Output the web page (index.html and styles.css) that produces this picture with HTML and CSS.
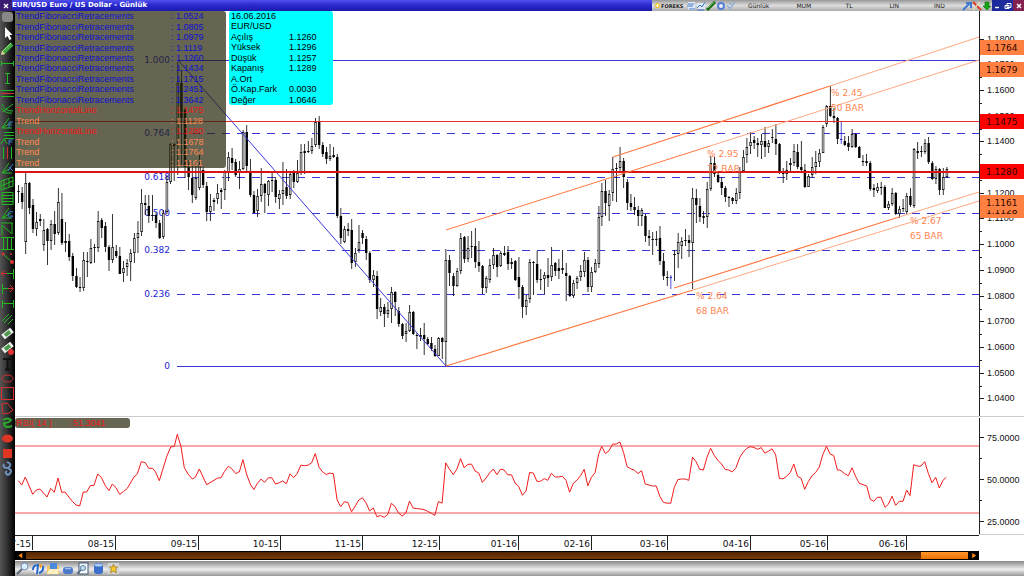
FILE: index.html
```html
<!DOCTYPE html>
<html lang="tr">
<head>
<meta charset="utf-8">
<title>EUR/USD Euro / US Dollar - Günlük</title>
<link rel="stylesheet" href="styles.css">
</head>
<body>
<div class="app">
  <header class="titlebar">
    <button class="close-tab" aria-label="Kapat"><svg viewBox="0 0 6 6" class="mini"><path d="M1 1L5 5M5 1L1 5" stroke="#fff" stroke-width="1.3"/></svg></button>
    <h1 class="title">EUR/USD Euro / US Dollar - Günlük</h1>
    <div class="options">
      <span class="brand"><i class="sun"></i>FOREKS</span>
      <div class="glyphs">
        <svg viewBox="0 0 10 10"><rect x="2" y="1" width="7" height="8" fill="#dfe9f8"/><path d="M2 3h6M1 5h6M3 8h6" stroke="#467ec8" stroke-width="1.2"/></svg>
        <svg viewBox="0 0 10 10"><rect x="1" y="2" width="8" height="6" fill="#dfe9f8"/><path d="M1 7L4 4L6 6L9 1M1 9h7" stroke="#3c78c8" fill="none"/></svg>
        <svg viewBox="0 0 10 10"><path d="M1 9L9 1" stroke="#176b17" stroke-width="3"/><path d="M2 7L8 1" stroke="#79c25c"/></svg>
        <svg viewBox="0 0 10 10"><circle cx="5" cy="5" r="3" stroke="#5580d5" stroke-width="2" fill="#eef"/></svg>
        <svg viewBox="0 0 10 10"><path d="M1 4L4 8L9 1M3 3h3" stroke="#91add8" stroke-width="1.3" fill="none"/></svg>
      </div>
      <nav class="modes">
        <button>Günlük</button><button>MUM</button><button>TL</button><button>LIN</button><button>IND</button>
      </nav>
      <div class="glyphs">
        <svg viewBox="0 0 10 10"><path d="M1 9L8 2M4 2h5v5" stroke="#3f78d0" stroke-width="2" fill="none"/></svg>
        <svg viewBox="0 0 10 10"><path d="M1 1L9 9" stroke="#dd3c20" stroke-width="2"/><path d="M1 9L8 1" stroke="#dbd8b0" stroke-width="1.5"/></svg>
        <svg viewBox="0 0 10 10"><path d="M3 1h4v4h2L5 9L1 5h2z" fill="#16a516" stroke="#087008" stroke-width=".6"/></svg>
      </div>
    </div>
    <div class="window-buttons">
      <button aria-label="Küçült"><svg viewBox="0 0 8 8"><path d="M2 5.5h4" stroke="#fff" stroke-width="1.4"/></svg></button>
      <button aria-label="Geri yükle"><svg viewBox="0 0 8 8"><path d="M3 1.500h4v4h-4zM1 3.500h4v3h-4z" fill="none" stroke="#fff"/></svg></button>
      <button aria-label="Pencereyi kapat" class="red"><svg viewBox="0 0 8 8"><path d="M2 2L6 6M6 2L2 6" stroke="#fff" stroke-width="1.4"/></svg></button>
    </div>
  </header>
  <div class="body">
    <aside class="tools" id="tools"></aside>
    <main class="workspace">
      <section class="pane">
        <svg class="chart" id="price" viewBox="15 11 1009 406" role="img" aria-label="EUR/USD"></svg>
        <table class="legend" id="legend"></table>
        <dl class="quote">
          <dt>16.06.2016</dt><dd></dd>
          <dt>EUR/USD</dt><dd></dd>
          <dt>Açılış</dt><dd>1.1260</dd>
          <dt>Yüksek</dt><dd>1.1296</dd>
          <dt>Düşük</dt><dd>1.1257</dd>
          <dt>Kapanış</dt><dd>1.1289</dd>
          <dt>A.Ort</dt><dd></dd>
          <dt>Ö.Kap.Fark</dt><dd>0.0030</dd>
          <dt>Değer</dt><dd>1.0646</dd>
        </dl>
      </section>
      <section class="pane">
        <svg class="chart" id="rsi" viewBox="15 417 1009 118" role="img" aria-label="RSI"></svg>
        <div class="rsi-tag"><span>RSI( 14 )</span><span>: 51.3041</span></div>
      </section>
      <svg class="chart" id="dates" viewBox="15 535 1009 16"></svg>
      <div class="scroll-row">
        <div class="scrollbar">
          <button aria-label="Sola"><svg viewBox="0 0 11 8"><path d="M7.500 1v6L3 4z" fill="#ff8a10"/></svg></button>
          <div class="track"><div class="thumb"></div></div>
          <button aria-label="Sağa"><svg viewBox="0 0 11 8"><path d="M4 1v6L8.500 4z" fill="#ff8a10"/></svg></button>
        </div>
      </div>
      <footer class="dock">
        <button aria-label="Ara"><svg viewBox="0 0 14 13"><path d="M1 12L6 7" stroke="#57687c" stroke-width="2"/><circle cx="8.500" cy="4.500" r="3.500" fill="#d7efff" stroke="#6d88a8"/></svg></button>
        <button aria-label="Yenile"><svg viewBox="0 0 14 13"><circle cx="7" cy="7" r="5" fill="#f4f7ff"/><path d="M2 8Q2 3 7 3L6 12M8 11Q13 9 12 4" fill="none" stroke="#2865c8" stroke-width="2"/><path d="M8 2l4 1l-3 4z" fill="#f0a020"/></svg></button>
        <button aria-label="Aç"><svg viewBox="0 0 14 13"><path d="M1 4h12v8h-12z" fill="#f2c45a"/><path d="M4 1h7v6h-7z" fill="#4d88dc"/><path d="M1 12L3 7h10l-1 5z" fill="#fff0bd"/></svg></button>
        <button aria-label="Bulut"><svg viewBox="0 0 14 13"><rect x="2" y="5" width="10" height="7" rx="3" fill="#4b78cb"/><path d="M4 6.500h6" stroke="#a9c5ef" stroke-width="1.500"/></svg></button>
        <button aria-label="Önizle"><svg viewBox="0 0 14 13"><rect x="3" y="1" width="9" height="11" fill="#f6fbff" stroke="#3c5672"/><circle cx="7" cy="6" r="2.500" fill="#c5e3f5" stroke="#537b9a"/><path d="M1 12L5 8" stroke="#45617b" stroke-width="1.500"/></svg></button>
        <button aria-label="Veri"><svg viewBox="0 0 14 13"><rect x="3" y="1" width="9" height="11" rx="3" fill="#3c6fca"/><ellipse cx="7.500" cy="3" rx="4" ry="1.500" fill="#aecbf5"/></svg></button>
        <button aria-label="Favori"><svg viewBox="0 0 14 13"><rect x="2" y="1" width="11" height="11" fill="#d4d4d4"/><path d="M7.500 2l1 3h3l-2 2l1 4l-3-2l-3 2l1-4l-2-2h3z" fill="#ffcc28" stroke="#98711d" stroke-width=".7"/></svg></button>
      </footer>
    </main>
  </div>
</div>
<script src="chart.js"></script>
</body>
</html>
```
FILE: styles.css
```css
* { box-sizing: border-box; }
body { margin: 0; background: #fff; font-family: "Liberation Sans", Arial, sans-serif; font-size: 9px; color: #000; }
button { margin: 0; padding: 0; border: 0; background: none; font: inherit; color: inherit; display: flex; align-items: center; justify-content: center; }
svg { display: block; }
.app { display: flex; flex-direction: column; min-height: 100vh; }
.titlebar { display: flex; height: 11px; background: linear-gradient(#5050ee, #2828cc 50%, #1b1bac); color: #fff; align-items: stretch; }
.close-tab { width: 12px; background: #3a1c70; }
.mini { width: 6px; height: 6px; }
.title { flex: 1; margin: 0; font: bold 7px/11px "DejaVu Sans", Verdana, sans-serif; white-space: nowrap; }
.options { display: flex; width: 340px; padding-left: 3px; align-items: center; background: linear-gradient(#999, #ddd 50%, #aaa); color: #222; font: 6px/10px "DejaVu Sans", Verdana, sans-serif; }
.brand { display: flex; align-items: center; width: 31px; font-size: 5px; font-weight: bold; }
.sun { width: 5px; height: 5px; margin-right: 1px; border: 1px solid #f6b900; border-radius: 50%; background: #fff7c0; }
.glyphs { display: flex; }
.glyphs svg { width: 10px; height: 10px; }
.modes { flex: 1; display: grid; grid-template-columns: repeat(5, 1fr); }
.window-buttons { display: flex; width: 32px; background: #1c2a9c; }
.window-buttons button { flex: 1; }
.window-buttons svg { width: 8px; height: 8px; }
.window-buttons .red { background: #842050; }
.body { flex: 1; display: flex; }
.tools { width: 15px; background: linear-gradient(90deg, #555, #333 45%, #000); }
.tools button { width: 15px; height: 15px; }
.tools svg { width: 15px; height: 15px; fill: none; }
.workspace { flex: 1; min-width: 0; display: flex; flex-direction: column; }
.pane { position: relative; }
.chart { width: 100%; height: auto; }
.chart text { font: 9px "DejaVu Sans", Verdana, sans-serif; }
.chart .num { font-family: "Liberation Sans", Arial, sans-serif; }
.legend { position: absolute; left: 0; top: 0; width: 211px; height: 157px; border-spacing: 0; border-radius: 0 3px 3px 0; background: rgba(35, 35, 9, .7); line-height: 10px; }
.legend td { padding: 0 0 0 1px; }
.legend td + td { width: 55px; padding: 0; }
.fib { color: #1010d0; }
.level { color: #f01818; }
.trend { color: #ff8850; }
.quote { position: absolute; left: 214px; top: 0; width: 104px; height: 94px; margin: 0; padding-left: 2px; border-radius: 3px; background: #0ff; display: grid; grid-template-columns: 58px 1fr; grid-auto-rows: 1fr; line-height: 10px; }
.quote dd { margin: 0; }
.rsi-tag { position: absolute; left: 0; top: 1px; display: flex; gap: 16px; width: 115px; padding-left: 1px; border-radius: 3px; background: #666653; color: #f01818; line-height: 10px; }
.scroll-row { padding-right: 45px; height: 10px; }
.scrollbar { display: flex; height: 9px; background: #000; padding: 1px 0; }
.scrollbar button { width: 11px; }
.scrollbar svg { width: 11px; height: 7px; }
.track { flex: 1; display: flex; justify-content: flex-end; background: linear-gradient(#502400, #783a04); }
.thumb { width: 5%; background: linear-gradient(#ff9628, #e87208); }
.dock { display: flex; gap: 1px; margin-top: auto; height: 15px; padding-left: 1px; background: linear-gradient(#888, #eee 55%, #999); }
.dock button { width: 14px; height: 15px; }
.dock svg { width: 14px; height: 13px; }
```
FILE: chart.js
```js
const priceSvg = document.getElementById('price');
const rsiSvg = document.getElementById('rsi');
const datesSvg = document.getElementById('dates');

// Each segment: first x, last x, then candles "high top bottom low kind".
// kind: f falling, h rising, b highlighted
const segments = [
[18.3, 235.5, `185 191 192 203 f,187 193 202 209 f,172 183 242 254 h,182 183 208 214 f,199 205 229 233 f,212 222 229 236 h,214 219 221 226 f,219 230 245 251 h,228 229 241 265 f,220 224 241 250 h,211 224 234 245 f,188 202 233 235 h,193 219 243 245 f,222 241 243 252 f,234 241 257 261 f,253 256 276 281 f,268 276 287 288 f,277 287 288 292 f,252 260 288 291 h,252 261 262 277 f,239 248 263 264 h,244 247 248 263 f,211 221 248 252 h,218 220 228 238 f,222 226 247 252 f,245 247 260 271 f,214 247 260 263 h,245 251 256 258 f,247 256 274 274 f,261 268 273 282 h,259 263 267 276 h,249 253 262 281 h,233 238 253 263 h,221 233 238 253 h,189 203 232 236 h,195 203 205 215 f,195 206 216 223 f,195 215 216 221 f,212 215 223 228 f,220 223 238 239 f,210 213 237 239 h,175 182 212 214 h,143 144 182 184 h,143 144 146 181 f,62 83 143 175 h,70 83 118 165 f,108 110 167 178 f,160 167 177 190 f,166 178 195 203 f,165 178 198 200 h,155 165 188 190 h,167 170 185 188 f,182 186 212 221 f,194 206 212 221 h,198 200 202 211 f,184 193 199 204 h,188 190 192 209 f,170 172 190 200 h,152 157 173 181 h,148 158 163 170 f,159 162 175 177 f`],
[239.3, 449.3, `161 169 173 189 h,130 132 169 170 h,125 132 166 173 f,159 171 195 197 f,191 195 213 213 f,189 196 211 217 h,168 184 196 202 h,183 184 193 213 f,180 181 195 206 h,172 180 181 192 f,177 180 197 203 f,190 194 199 209 h,162 190 194 205 h,169 187 196 199 f,172 174 195 199 h,170 173 182 188 f,160 173 182 183 h,144 152 173 175 h,144 151 153 174 f,141 151 152 153 f,138 146 151 154 h,118 122 145 147 h,116 122 145 149 f,142 145 154 157 f,147 152 159 164 f,144 156 159 161 h,147 155 157 158 f,154 157 216 218 f,208 216 238 244 f,226 229 242 243 h,223 229 231 236 f,219 230 263 269 f,248 253 262 267 h,225 242 250 253 h,230 233 238 244 f,236 239 253 260 f,251 253 280 283 f,270 275 280 287 h,271 276 309 319 f,298 307 312 316 h,304 307 314 327 f,302 310 314 318 h,287 292 309 323 h,291 292 302 316 f,307 311 324 327 f,323 324 336 339 f,323 331 334 342 h,305 312 331 332 h,311 312 334 335 f,333 335 336 349 f,328 335 337 341 f,323 335 339 355 f,337 339 344 345 f,337 343 349 351 f,345 349 356 357 f,337 338 356 356 h,337 338 342 359 f,249 260 342 366 h,255 260 273 286 f`],
[453.3, 598.7, `273 276 286 296 f,268 271 286 287 h,233 238 271 274 h,236 237 259 263 f,236 248 259 262 h,231 246 247 258 f,228 246 262 268 f,241 262 266 272 f,265 266 288 294 f,276 278 288 293 h,259 265 280 283 h,248 255 265 269 h,254 255 267 277 f,251 253 266 267 h,246 253 255 256 f,246 252 264 270 f,258 262 264 269 f,260 261 280 281 f,257 277 287 299 f,285 287 307 318 f,295 300 307 315 h,259 262 299 303 h,261 262 263 295 f,251 264 280 283 f,269 279 280 290 f,272 275 279 294 h,258 275 278 287 f,247 265 277 281 h,262 263 271 276 f,259 268 271 279 f,250 268 270 274 f,263 273 276 301 f,275 276 296 297 f,280 283 296 298 h,276 278 283 289 h,265 271 277 281 h,252 260 272 277 h,257 260 287 292 f,267 272 287 292 h,259 263 272 273 h,206 217 264 268 h`],
[601.7, 743.3, `183 191 217 226 h,180 191 203 216 f,190 194 206 221 h,157 169 193 201 h,163 168 169 202 f,147 161 168 173 h,158 161 177 188 f,179 182 203 210 f,194 203 207 211 f,197 207 210 215 f,206 210 216 226 f,208 210 216 226 h,214 216 236 242 f,230 236 238 246 f,232 239 240 255 f,231 239 240 246 f,226 238 261 265 f,253 261 276 280 f,271 277 278 286 f,275 277 278 289 b,250 254 255 281 f,233 242 254 268 h,237 241 246 259 h,229 240 241 246 f,235 240 243 257 f,188 198 243 289 h,189 198 205 223 f,198 206 217 222 f,211 216 218 224 f,182 189 217 228 h,156 163 189 191 h,157 163 174 177 f,171 175 182 183 f,177 182 188 195 f,186 188 197 202 f,196 197 198 207 f,197 198 201 204 f,188 193 201 204 h,167 171 193 199 h,150 157 171 172 h`],
[746.7, 870, `138 147 155 163 h,132 142 146 154 h,136 140 143 149 f,138 143 145 157 f,134 141 145 159 h,127 141 147 157 f,140 143 147 153 h,129 137 138 143 f,124 139 144 155 f,143 144 173 174 f,168 173 174 183 f,161 170 174 180 h,158 163 165 171 f,144 151 163 166 h,144 152 167 169 f,141 167 170 173 f,164 170 187 188 f,174 176 187 187 h,157 167 175 178 h,151 162 167 174 h,149 153 162 167 h,125 127 153 153 h,105 106 124 127 h,86 106 116 117 f,108 116 118 123 f,117 118 139 144 f,121 139 140 144 b,136 141 145 146 f,136 143 147 151 f,129 134 147 148 h,133 134 147 148 f,146 147 158 158 f,155 161 162 166 f,154 161 163 166 f,161 163 189 191 f`],
[873.7, 946.7, `184 188 190 197 f,183 187 191 193 h,182 187 188 195 f,185 187 208 208 f,201 204 208 210 h,188 193 204 206 h,192 193 214 215 f,206 209 214 218 h,199 208 209 212 f,193 196 212 214 h,188 196 205 207 f,148 149 206 208 h,142 151 153 159 f,146 151 152 157 f,139 143 152 154 h,137 143 162 164 f,161 163 179 180 f,166 169 179 184 h,168 169 190 195 f,168 177 190 195 h,167 169 177 178 h`]
];
const candles = [];
for (const [x0, x1, text] of segments) {
  const rows = text.split(',');
  rows.forEach((row, i) => {
    const [hi, top, bottom, lo, kind] = row.trim().split(' ');
    candles.push({ x: x0 + (x1 - x0) * i / (rows.length - 1), hi: +hi, top: +top, bottom: +bottom, lo: +lo, kind });
  });
}

const line = (x1, y1, x2, y2, color, width = 1, extra = '') =>
  `<line x1="${x1}" y1="${y1}" x2="${x2}" y2="${y2}" stroke="${color}" stroke-width="${width}" ${extra}/>`;
const label = (x, y, text, color = '#000', extra = '') => `<text x="${x}" y="${y}" fill="${color}" ${extra}>${text}</text>`;
const rect = (x, y, w, h, fill) => `<rect x="${x}" y="${y}" width="${w}" height="${h}" fill="${fill}"/>`;

let out = '';
const blue = '#3838d8';
for (const [name, y, solid] of [['1.000', 60, 1], ['0.764', 133], ['0.618', 177], ['0.500', 213], ['0.382', 250], ['0.236', 294], ['0', 366, 1]]) {
  out += line(177, y + .5, 979, y + .5, blue, 1, solid ? '' : 'stroke-dasharray="8 7"');
  out += label(170, y + 3, name, '#2424d4', 'text-anchor="end"');
}
const wick = .8, bodyWidth = 2.4;
for (const c of candles) {
  const color = c.kind === 'b' ? '#2222cc' : '#000';
  const mid = c.x + .2, height = Math.max(1, c.bottom - c.top);
  out += rect((mid - wick / 2).toFixed(2), c.hi, wick, c.lo - c.hi, color);
  out += rect((mid - bodyWidth / 2).toFixed(2), c.top, bodyWidth, height, color);
  if (c.kind === 'h' && height > 2) out += rect((mid - .65).toFixed(2), c.top + .8, 1.3, height - 1.6, '#ccc');
}
out += line(178, 60, 446, 366, blue);
out += line(15, 121.5, 979, 121.5, '#e03030') + line(15, 172, 979, 172, '#d81414', 2);

const orange = '#ff7840', pale = '#ffa880';
out += line(613, 157, 830, 86, orange, 1.2) + line(830, 86, 979, 37, pale);
out += line(446, 230, 710, 146, orange) + line(710, 146, 979, 60, pale);
out += line(446, 366, 693, 290, orange, 1.2) + line(693, 290, 979, 201, pale);
out += line(674, 288, 899, 217, orange, 1.2) + line(899, 217, 979, 192, pale);
for (const [x, y, a, b] of [[831, 96, '% 2.45', '50 BAR'], [707, 157, '% 2.95', '72 BAR'], [696, 299, '% 2.64', '68 BAR'], [910, 224, '% 2.67', '65 BAR']])
  out += label(x, y, a, '#ff8450') + label(x, y + 15, b, '#ff8450');

out += line(979.5, 11, 979.5, 417, '#222');
for (let i = 0; i < 15; i++) {
  const y = Math.round(38.5 + i * 25.7);
  out += line(979, y + .5, 984, y + .5, '#222') + (i < 14 ? line(979, y + 13.5, 982, y + 13.5, '#222') : '');
  out += label(987, y + 3, (1.18 - i * .01).toFixed(4), '#111', 'class="num"');
}
for (const [y, value, fill] of [[40, '1.1764', '#ff8040'], [62, '1.1679', '#ff8040'], [114, '1.1475', '#ff0000'], [164, '1.1280', '#ff0000'], [203, '1.1128', '#ff8040'], [195, '1.1161', '#ff8040']])
  out += rect(980, y, 44, 15, fill) + label(986, y + 11, value, '#2c0800');
out += line(15, 416.5, 1024, 416.5, '#ccc');
priceSvg.innerHTML = out;

// Relative strength index over 14 bars
const close = candles.map(c => -(c.kind === 'h' ? c.top : c.bottom));
let gain = 0, loss = 0;
const computed = [];
for (let i = 1; i < close.length; i++) {
  const d = close[i] - close[i - 1], n = Math.min(i, 14);
  gain += (Math.max(d, 0) - gain) / n;
  loss += (Math.max(-d, 0) - loss) / n;
  const rsi = 100 * gain / (gain + loss || 1);
  computed.push([candles[i].x, 563.5 - 1.68 * rsi]);
}
const head = [55,242,65,255,76,231,98,283,109,270,120,267,141,291,152,265,163,277,174,234,185,277,195,276,217,304,228,315,239,318,250,276,260,276,271,257,282,256,293,222,304,232,316,257,327,272,337,252,348,263,359,283,370,275,382,265,402,231,412,222,424,185,436,188,446,205,458,205,467,217,478,242,500,170,512,141,523,139,532,103,543,140,553,203,565,223,577,237,586,232,598,207,620,254,653,234,663,233,673,215,685,199,695,206,708,221,716,216];
const tail = [0,210,14,221,25,227,36,203,47,230,58,250,80,258,91,298,101,304,112,292,123,292,135,322,145,313,156,289,167,316,178,304,189,304,200,270,210,287,221,194,235,199,243,198,254,185,265,220,276,248,287,232,298,264,309,241,319,232];
const points = [];
for (let i = 0; i < head.length; i += 2) points.push([head[i] / 3, 400 + head[i + 1] / 3]);
points.push(...computed.filter(p => p[0] > 239 && p[0] < 839));
for (let i = 0; i < tail.length; i += 2) points.push([840 + tail[i] / 3, 400 + tail[i + 1] / 3]);
let r = line(15, 446, 979, 446, '#f05050') + line(15, 513, 979, 513, '#f05050');
r += `<polyline points="${points.map(p => p.map(v => v.toFixed(1)).join()).join(' ')}" fill="none" stroke="#f01c1c"/>`;
r += line(979.5, 418, 979.5, 534, '#222');
for (const [y, t] of [[437.5, '75.0000'], [458.5], [479.5, '50.0000'], [500.5], [521.5, '25.0000']])
  r += line(979, y, t ? 984 : 982, y, '#222') + (t ? label(987, y + 3, t, '#111', 'class="num"') : '');
r += line(979, 534.5, 1024, 534.5, '#ccc');
rsiSvg.innerHTML = r;

let d = line(15, 535.5, 979, 535.5, '#222');
[[32, '07-15'], [115, '08-15'], [198, '09-15'], [280, '10-15'], [362, '11-15'], [439, '12-15'], [518, '01-16'], [591, '02-16'], [667, '03-16'], [750, '04-16'], [827, '05-16'], [906, '06-16']]
  .forEach(([x, t]) => { d += line(x + .5, 536, x + .5, 550, '#222') + label(x - 1, 547, t, '#111', 'text-anchor="end"'); });
datesSvg.innerHTML = d;

const legend = [];
for (const v of ['1.0524', '1.0805', '1.0979', '1.1119', '1.1260', '1.1434', '1.1715', '1.2451', '1.3642']) legend.push(['TrendFibonacciRetracements', v, 'fib']);
legend.push(['TrendHorizontalLine', '1.1475', 'level'], ['Trend', '1.1128', 'trend'], ['TrendHorizontalLine', '1.1280', 'level'], ['Trend', '1.1678', 'trend'], ['Trend', '1.1764', 'trend'], ['Trend', '1.1161', 'trend']);
document.getElementById('legend').innerHTML = '<tbody>' + legend.map(([n, v, c]) => `<tr class="${c}"><td>${n}</td><td>: ${v}</td></tr>`).join('') + '</tbody>';

const g = 'stroke="#22b822"', red = 'stroke="#d83030"', bl = 'stroke="#3878c8"';
const fan = `<path ${g} d="M2 12H12M2 12L9 2M2 12L11 7"/>`;
const icons = [
  ['Panel', '<rect x="2" y="1" width="11" height="10" rx="3" fill="#888"/>'],
  ['Seç', '<path fill="#fff" d="M5 1v11l2.500-2l2 4l2-1l-2-4h3z"/>'],
  ['Kalem', '<path stroke="#3da83d" stroke-width="4" d="M3 12L12 3"/><path stroke="#a6e08a" d="M2 11L11 2"/><path fill="#ecd9a0" d="M1 14l1-4l3 3z"/>'],
  ['Yatay çizgi', `<path ${g} d="M1 7.500H14M1.500 5v5M13.500 5v5"/>`],
  ['Dikey çizgi', `<path ${g} d="M7.500 2V13M5 2.500h5M5 12.500h5"/>`],
  ['Paralel', `<path ${g} d="M1 4.500H14M1 10.500H14"/><path ${red} d="M1 7.500H14"/>`],
  ['Yay', `<path ${g} d="M2 3Q4 10 13 10M2 11L13 3M1 7Q6 13 12 12"/>`],
  ['Fibonacci yelpaze', fan + `<path ${bl} d="M9 12V6h4M9 9h3"/>`],
  ['Fibonacci seviye', `<path ${g} d="M4 1.500H14M4 4.500H14M4 7.500H14M1 13L4 8L7 13"/><path ${bl} d="M9 14V9h4M9 11h3"/>`],
  ['Zaman', `<path ${g} d="M3.500 1V13M11.500 1V13"/><path ${red} d="M7.500 1V13"/>`],
  ['Yelpaze', fan + `<path ${bl} d="M8 10L13 3M9 6L13 10"/>`],
  ['Kanal', `<path ${g} d="M1 5L13 1V10L1 14zM1 10L13 5M4 4v9M9 3v8"/>`],
  ['Izgara', `<path ${g} d="M2 1.500h11v12H2zM2 4.500h11M2 7.500h11M2 10.500h11"/>`],
  ['Gann', fan + `<path ${bl} d="M13 6Q8 4 8 9Q9 13 13 10H10"/>`],
  ['Zikzak', `<path ${g} d="M1 2h12M2 14V4L12 13V2"/>`],
  ['Sütunlar', `<path ${g} d="M1 1.500h13M1 13.500h13M3.500 1v12M7.500 1v12M11.500 1v12"/>`],
  ['Noktalar', `<path ${g} d="M3 3L12 11"/><circle cx="3" cy="3" r="1.500" fill="#d33"/><circle cx="12" cy="11" r="2" fill="#d33"/><circle cx="11" cy="3" r="1" fill="#d33"/>`],
  ['Sol ok', `<path ${g} d="M5 7.500H13M13.500 3v10"/><path ${red} d="M1 7.500H7M4 5L1 7.500L4 10"/>`],
  ['Sağ ok', `<path ${g} d="M2 7.500H10M2.500 3v10"/><path ${red} d="M8 7.500H13M10 4L13.500 7.500L10 11"/>`],
  ['Aralık', `<path ${g} d="M2 7.500H13M2.500 4v8M13.500 4v8"/>`],
  ['Eğik çizgiler', `<path ${g} d="M2 10L9 3M4 12L12 4M8 13L13 8"/>`],
  ['Silgi', '<path stroke="#eee" stroke-width="6" d="M3 11L12 4"/><path stroke="#4b9b4b" stroke-width="4" d="M5 9.500L10 5.500"/>'],
  ['Tümünü sil', '<path stroke="#eee" stroke-width="6" d="M3 10L12 3"/><path stroke="#4b9b4b" stroke-width="4" d="M5 8.500L10 4.500"/><circle cx="11" cy="11" r="3" fill="#d33"/>'],
  ['Metin', '<path stroke="#111" stroke-width="2" d="M3 3h9M7.500 3v11M5 13.500h5"/>'],
  ['Elips', `<ellipse ${red} cx="7.500" cy="7.500" rx="5.500" ry="3.500"/>`],
  ['Dikdörtgen', `<rect ${red} x="1.500" y="1.500" width="12" height="12"/>`],
  ['Çokgen', `<path ${red} d="M3 13L2 3L7 2L13 9L9 12z"/>`],
  ['Eğri', '<path stroke="#29a829" stroke-width="2" d="M3 4Q8 1 11 4Q9 7 4 7Q4 13 12 10"/>'],
  ['Dolu elips', '<ellipse fill="#df3524" cx="7.500" cy="7.500" rx="5.500" ry="4"/>'],
  ['Dolu kare', '<rect fill="#df3524" x="3" y="3" width="9" height="9"/>'],
  ['Döngü', '<path stroke="#6e8fbc" stroke-width="2" d="M7 1Q13 3 8 7Q2 7 4 3M8 7Q14 10 8 14Q4 12 7 10"/>']
];
document.getElementById('tools').innerHTML = icons.map(([n, s]) => `<button aria-label="${n}"><svg viewBox="0 0 15 15">${s}</svg></button>`).join('');
```
